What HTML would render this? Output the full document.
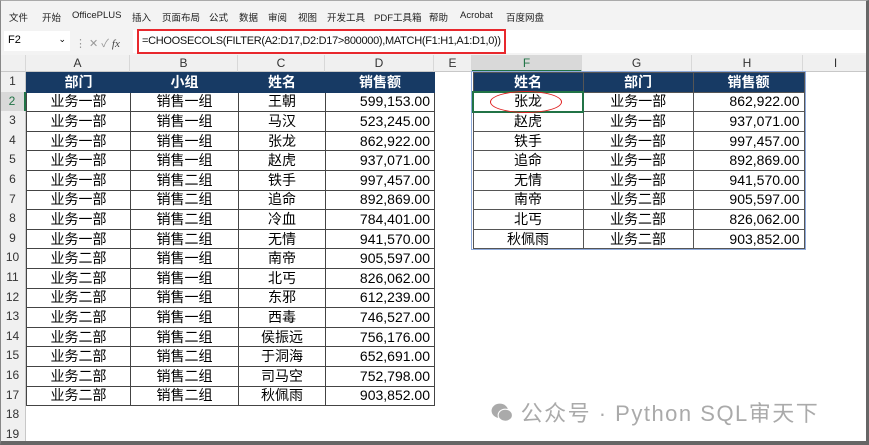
<!DOCTYPE html>
<html><head><meta charset="utf-8"><style>
*{margin:0;padding:0;box-sizing:border-box}
body{width:869px;height:445px;overflow:hidden;background:#fff;font-family:"Liberation Sans","Noto Sans CJK SC",sans-serif;position:relative}
.menu{position:absolute;left:0;top:0;width:869px;height:28px;background:#f3f3f3;font-size:9.5px;color:#222}
.menu span{position:absolute;top:10px}
.fbar{position:absolute;left:0;top:28px;width:869px;height:27px;background:#f3f3f3}
.nb{position:absolute;left:4px;top:31px;width:66px;height:20px;background:#fff;font-size:11px;padding:3px 4px}
.fx{position:absolute;left:137px;top:29px;width:369px;height:25px;border:2px solid #e8282d;background:#fff;font-size:11px;padding:4px 3px;color:#111;white-space:nowrap;overflow:hidden;letter-spacing:-0.3px}
.colh{position:absolute;top:55px;height:17px;background:#f0f0f0;border-bottom:1px solid #c8c8c8;border-right:1px solid #d8d8d8;font-size:12px;color:#333;text-align:center;line-height:16px}
.rowh{position:absolute;left:0;width:26px;height:19.6px;background:#f0f0f0;border-right:1px solid #c8c8c8;font-size:12px;color:#333;text-align:center;line-height:19px}
table{position:absolute;border-collapse:collapse;table-layout:fixed;font-size:14px}
td{height:19.6px;padding:0 4px;text-align:center;border:1px solid #444;white-space:nowrap;line-height:17px}
td.n{text-align:right}
tr.h td{background:#173a64;color:#fff;font-weight:bold;border-color:#173a64}
#t2 td{border-color:#555}
#t2{outline:1px solid #8eaadb}
</style></head><body>
<div class="menu">
<span style="left:9px">文件</span><span style="left:42px">开始</span><span style="left:72px">OfficePLUS</span><span style="left:132px">插入</span><span style="left:162px">页面布局</span><span style="left:209px">公式</span><span style="left:239px">数据</span><span style="left:268px">审阅</span><span style="left:298px">视图</span><span style="left:327px">开发工具</span><span style="left:374px">PDF工具箱</span><span style="left:429px">帮助</span><span style="left:460px">Acrobat</span><span style="left:506px">百度网盘</span>
</div>
<div class="fbar"></div>
<div class="nb">F2<span style="position:absolute;right:4px;top:3px;font-size:9px">⌄</span></div>
<div style="position:absolute;left:75px;top:35px;font-size:11px;color:#999">⋮ ✕ ✓ <i style="color:#444;font-family:'Liberation Serif',serif">fx</i></div>
<div style="position:absolute;left:133px;top:30px;width:736px;height:23px;background:#fff"></div>
<div class="fx">=CHOOSECOLS(FILTER(A2:D17,D2:D17&gt;800000),MATCH(F1:H1,A1:D1,0))</div>
<div style="position:absolute;left:0;top:55px;width:869px;height:390px;background:#fff"></div>
<div class="colh" style="left:0;width:26px"></div>
<div class="colh" style="left:26px;width:104px">A</div>
<div class="colh" style="left:130px;width:108px">B</div>
<div class="colh" style="left:238px;width:87px">C</div>
<div class="colh" style="left:325px;width:109px">D</div>
<div class="colh" style="left:434px;width:38px">E</div>
<div class="colh" style="left:472px;width:110px;background:#d9d9d9;border-bottom:2px solid #217346;color:#217346">F</div>
<div class="colh" style="left:582px;width:110px">G</div>
<div class="colh" style="left:692px;width:111px">H</div>
<div class="colh" style="left:803px;width:66px">I</div>
<div class="rowh" style="top:72px">1</div><div class="rowh" style="top:91.6px;background:#d9d9d9;color:#217346;border-right:2px solid #217346">2</div><div class="rowh" style="top:111.2px">3</div><div class="rowh" style="top:130.8px">4</div><div class="rowh" style="top:150.4px">5</div><div class="rowh" style="top:170px">6</div><div class="rowh" style="top:189.6px">7</div><div class="rowh" style="top:209.2px">8</div><div class="rowh" style="top:228.8px">9</div><div class="rowh" style="top:248.4px">10</div><div class="rowh" style="top:268px">11</div><div class="rowh" style="top:287.6px">12</div><div class="rowh" style="top:307.2px">13</div><div class="rowh" style="top:326.8px">14</div><div class="rowh" style="top:346.4px">15</div><div class="rowh" style="top:366px">16</div><div class="rowh" style="top:385.6px">17</div><div class="rowh" style="top:405.2px">18</div><div class="rowh" style="top:424.8px">19</div>
<table style="left:26px;top:72px;width:408px">
<colgroup><col style="width:104px"><col style="width:108px"><col style="width:87px"><col style="width:109px"></colgroup>
<tr class="h"><td>部门</td><td>小组</td><td>姓名</td><td>销售额</td></tr>
<tr><td>业务一部</td><td>销售一组</td><td>王朝</td><td class="n">599,153.00</td></tr>
<tr><td>业务一部</td><td>销售一组</td><td>马汉</td><td class="n">523,245.00</td></tr>
<tr><td>业务一部</td><td>销售一组</td><td>张龙</td><td class="n">862,922.00</td></tr>
<tr><td>业务一部</td><td>销售一组</td><td>赵虎</td><td class="n">937,071.00</td></tr>
<tr><td>业务一部</td><td>销售二组</td><td>铁手</td><td class="n">997,457.00</td></tr>
<tr><td>业务一部</td><td>销售二组</td><td>追命</td><td class="n">892,869.00</td></tr>
<tr><td>业务一部</td><td>销售二组</td><td>冷血</td><td class="n">784,401.00</td></tr>
<tr><td>业务一部</td><td>销售二组</td><td>无情</td><td class="n">941,570.00</td></tr>
<tr><td>业务二部</td><td>销售一组</td><td>南帝</td><td class="n">905,597.00</td></tr>
<tr><td>业务二部</td><td>销售一组</td><td>北丐</td><td class="n">826,062.00</td></tr>
<tr><td>业务二部</td><td>销售一组</td><td>东邪</td><td class="n">612,239.00</td></tr>
<tr><td>业务二部</td><td>销售一组</td><td>西毒</td><td class="n">746,527.00</td></tr>
<tr><td>业务二部</td><td>销售二组</td><td>侯振远</td><td class="n">756,176.00</td></tr>
<tr><td>业务二部</td><td>销售二组</td><td>于洞海</td><td class="n">652,691.00</td></tr>
<tr><td>业务二部</td><td>销售二组</td><td>司马空</td><td class="n">752,798.00</td></tr>
<tr><td>业务二部</td><td>销售二组</td><td>秋佩雨</td><td class="n">903,852.00</td></tr>
</table>
<table id="t2" style="left:472px;top:72px;width:331px">
<colgroup><col style="width:110px"><col style="width:110px"><col style="width:111px"></colgroup>
<tr class="h"><td>姓名</td><td>部门</td><td>销售额</td></tr>
<tr><td style="border:2px solid #217346">张龙</td><td>业务一部</td><td class="n">862,922.00</td></tr>
<tr><td>赵虎</td><td>业务一部</td><td class="n">937,071.00</td></tr>
<tr><td>铁手</td><td>业务一部</td><td class="n">997,457.00</td></tr>
<tr><td>追命</td><td>业务一部</td><td class="n">892,869.00</td></tr>
<tr><td>无情</td><td>业务一部</td><td class="n">941,570.00</td></tr>
<tr><td>南帝</td><td>业务二部</td><td class="n">905,597.00</td></tr>
<tr><td>北丐</td><td>业务二部</td><td class="n">826,062.00</td></tr>
<tr><td>秋佩雨</td><td>业务二部</td><td class="n">903,852.00</td></tr>
</table>
<div style="position:absolute;left:490px;top:91px;width:72px;height:22px;border:1.5px solid #e02020;border-radius:50%"></div>
<div style="position:absolute;left:491px;top:396px;font-size:22px;letter-spacing:1.5px;color:#aaa;white-space:nowrap">
<svg width="22" height="20" viewBox="0 0 20 18" style="vertical-align:-2px"><ellipse cx="8" cy="7" rx="7.5" ry="6.5" fill="#aaa"/><ellipse cx="13" cy="11" rx="6.5" ry="5.5" fill="#aaa" stroke="#fff" stroke-width="1"/></svg>
公众号 · Python SQL审天下</div>
<div style="position:absolute;left:0;top:0;width:869px;height:445px;border-right:3px solid #666;border-bottom:4px solid #666;border-left:1px solid #888;border-top:1px solid #aaa;pointer-events:none"></div>
</body></html>
